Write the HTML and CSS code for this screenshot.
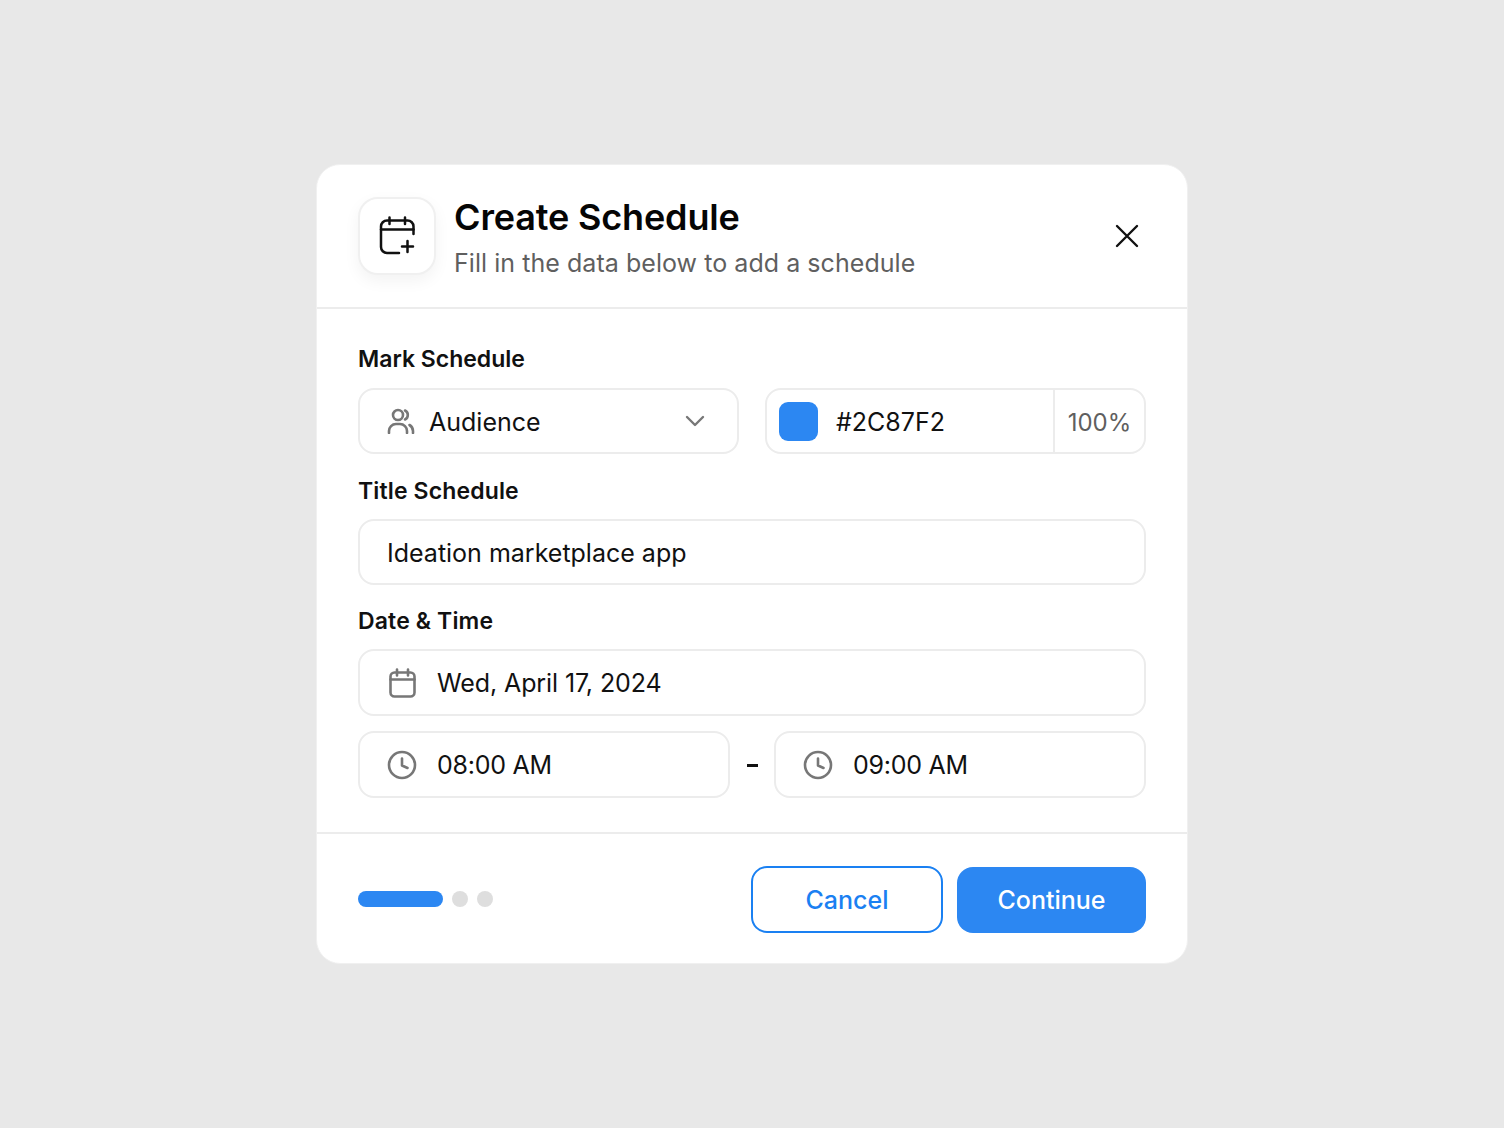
FILE: index.html
```html
<!DOCTYPE html>
<html lang="en">
<head>
    <meta charset="UTF-8">
    <meta name="viewport" content="width=device-width, initial-scale=1.0">
    <title>Create Schedule</title>
    <link rel="stylesheet" href="styles.css">
</head>
<body>
    <section class="modal">
        <header class="modal-head">
            <div class="head-icon">
                <svg width="38" height="40" viewBox="0 0 38 40" fill="none" stroke="#111" stroke-width="2.5" stroke-linecap="round" stroke-linejoin="round">
                    <path d="M21 37H9a6 6 0 0 1-6-6V10.500a6 6 0 0 1 6-6h20.500a6 6 0 0 1 6 6V18"/>
                    <path d="M3 13.500h32.500"/>
                    <path d="M11.500 1.500v6.500M27 1.500v6.500"/>
                    <path d="M29.500 25v11M24 30.500h11"/>
                </svg>
            </div>
            <div class="head-text">
                <h1>Create Schedule</h1>
                <p>Fill in the data below to add a schedule</p>
            </div>
            <button class="close">
                <svg width="24" height="24" viewBox="0 0 24 24" fill="none" stroke="#111" stroke-width="2.4" stroke-linecap="round">
                    <path d="M2 2l20 20M22 2L2 22"/>
                </svg>
            </button>
        </header>

        <div class="modal-body">
            <label class="label label-first">Mark Schedule</label>
            <div class="row-mark">
                <div class="field select">
                    <svg class="ico-users" width="28" height="26" viewBox="0 0 28 26" fill="none" stroke="#777" stroke-width="2.6" stroke-linecap="round">
                        <circle cx="11" cy="7" r="5"/>
                        <path d="M2 25v-2a7 7 0 0 1 7-7h4a7 7 0 0 1 7 7v2"/>
                        <path d="M18 2.500a5 5 0 0 1 0 9"/>
                        <path d="M26 25v-2a7 7 0 0 0-3.500-6"/>
                    </svg>
                    <span class="value">Audience</span>
                    <svg class="chevron" width="20" height="12" viewBox="0 0 20 12" fill="none" stroke="#777" stroke-width="2.4" stroke-linecap="round" stroke-linejoin="round">
                        <path d="M2 2l8 8 8-8"/>
                    </svg>
                </div>
                <div class="field color">
                    <span class="swatch"></span>
                    <span class="value hex">#2C87F2</span>
                    <span class="opacity">100%</span>
                </div>
            </div>

            <label class="label">Title Schedule</label>
            <div class="field title-field">
                <span class="value">Ideation marketplace app</span>
            </div>

            <label class="label">Date &amp; Time</label>
            <div class="field date-field">
                <svg width="30" height="30" viewBox="0 0 30 30" fill="none" stroke="#777" stroke-width="2.6" stroke-linecap="round" stroke-linejoin="round">
                    <rect x="3.500" y="4.500" width="24" height="24" rx="4"/>
                    <path d="M3.500 11.500h24M10 1.500v6M21 1.500v6"/>
                </svg>
                <span class="value">Wed, April 17, 2024</span>
            </div>
            <div class="row-time">
                <div class="field time-field">
                    <svg width="30" height="30" viewBox="0 0 30 30" fill="none" stroke="#777" stroke-width="2.6" stroke-linecap="round" stroke-linejoin="round">
                        <circle cx="15" cy="15" r="13"/>
                        <path d="M15 8.500V15.500l5.500 2.500"/>
                    </svg>
                    <span class="value">08:00 AM</span>
                </div>
                <span class="dash"></span>
                <div class="field time-field">
                    <svg width="30" height="30" viewBox="0 0 30 30" fill="none" stroke="#777" stroke-width="2.6" stroke-linecap="round" stroke-linejoin="round">
                        <circle cx="15" cy="15" r="13"/>
                        <path d="M15 8.500V15.500l5.500 2.500"/>
                    </svg>
                    <span class="value">09:00 AM</span>
                </div>
            </div>
        </div>

        <footer class="modal-foot">
            <div class="steps">
                <span class="step active"></span>
                <span class="step"></span>
                <span class="step"></span>
            </div>
            <div class="actions">
                <button class="btn btn-outline">Cancel</button>
                <button class="btn btn-primary">Continue</button>
            </div>
        </footer>
    </section>
</body>
</html>
```

FILE: styles.css
```css
body {
    margin: 0;
    padding: 0;
    height: 1128px;
    display: flex;
    align-items: center;
    justify-content: center;
    background-color: #e8e8e8;
    font-family: Inter, 'Liberation Sans', sans-serif;
    color: #111;
}

.modal {
    box-sizing: border-box;
    width: 872px;
    height: 800px;
    background-color: #fff;
    border: 1px solid #f0f0f0;
    border-radius: 24px;
    display: flex;
    flex-direction: column;
}

.modal-head {
    height: 144px;
    padding: 0 41px;
    box-sizing: border-box;
    border-bottom: 2px solid #ececec;
    display: flex;
    align-items: center;
}

.head-icon {
    box-sizing: border-box;
    width: 78px;
    height: 78px;
    border: 2px solid #f0f0f0;
    border-radius: 20px;
    background-color: #fff;
    box-shadow: 0 6px 16px rgba(0, 0, 0, 0.05);
    display: flex;
    align-items: center;
    justify-content: center;
}

.head-text {
    margin-left: 18px;
    padding-top: 4px;
    flex: 1;
}

h1 {
    margin: 0;
    font-size: 36px;
    line-height: 42px;
    font-weight: 600;
    letter-spacing: -0.15px;
    color: #050505;
}

p {
    margin: 8px 0 0;
    font-size: 25px;
    line-height: 34px;
    letter-spacing: 0.05px;
    color: #5f5f5f;
}

.close {
    border: none;
    background: none;
    padding: 0;
    margin-right: 7px;
    display: flex;
}

.modal-body {
    padding: 0 41px;
    height: 525px;
    box-sizing: border-box;
    border-bottom: 2px solid #ececec;
    display: flex;
    flex-direction: column;
}

.label {
    font-size: 23px;
    line-height: 30px;
    font-weight: 600;
    letter-spacing: 0.14px;
    margin-bottom: 13px;
}

.label-first {
    margin-top: 35px;
    margin-bottom: 14px;
    letter-spacing: 0;
}

.field {
    box-sizing: border-box;
    height: 66px;
    border: 2px solid #ececec;
    border-radius: 16px;
    display: flex;
    align-items: center;
    padding-left: 27px;
    background-color: #fff;
}

.value {
    font-size: 25px;
    line-height: 32px;
    color: #111;
}

.row-mark {
    display: flex;
    gap: 26px;
    margin-bottom: 22px;
}

.row-mark .value,
.title-field .value {
    margin-top: 2px;
}

.select {
    width: 381px;
}

.ico-users {
    margin-right: 14px;
}

.select .value {
    flex: 1;
}

.chevron {
    margin-right: 32px;
}

.color {
    width: 381px;
    padding-left: 12px;
}

.swatch {
    width: 39px;
    height: 39px;
    border-radius: 9px;
    background-color: #2c87f2;
    margin-right: 18px;
}

.hex {
    flex: 1;
}

.opacity {
    box-sizing: border-box;
    width: 91px;
    height: 100%;
    padding-top: 2px;
    border-left: 2px solid #ececec;
    display: flex;
    align-items: center;
    justify-content: center;
    font-size: 24px;
    color: #5f5f5f;
}

.title-field {
    margin-bottom: 21px;
}

.date-field {
    height: 67px;
    margin-bottom: 15px;
}

.date-field .value,
.time-field .value {
    margin-left: 20px;
}

.date-field .value {
    letter-spacing: -0.1px;
}

.time-field .value {
    letter-spacing: -0.25px;
}

.row-time {
    display: flex;
    align-items: center;
}

.time-field {
    flex: 1;
    height: 67px;
}

.dash {
    width: 11px;
    height: 3px;
    background-color: #111;
    margin: 2px 16px 0 17px;
}

.modal-foot {
    flex: 1;
    padding: 2px 41px 0;
    display: flex;
    align-items: center;
    justify-content: space-between;
}

.steps {
    display: flex;
    gap: 9px;
    margin-bottom: 2px;
}

.step {
    width: 16px;
    height: 16px;
    border-radius: 8px;
    background-color: #dedede;
}

.step.active {
    width: 85px;
    background-color: #2c87f2;
}

.actions {
    display: flex;
    align-items: center;
    gap: 14px;
}

.btn {
    box-sizing: border-box;
    width: 189px;
    height: 66px;
    border-radius: 16px;
    font-family: Inter, 'Liberation Sans', sans-serif;
    font-size: 25px;
    font-weight: 500;
    cursor: pointer;
}

.btn-outline {
    width: 192px;
    height: 67px;
    background-color: #fff;
    border: 2px solid #1a80f2;
    color: #1a80f2;
}

.btn-primary {
    background-color: #2c87f2;
    border: none;
    color: #fff;
}
```
